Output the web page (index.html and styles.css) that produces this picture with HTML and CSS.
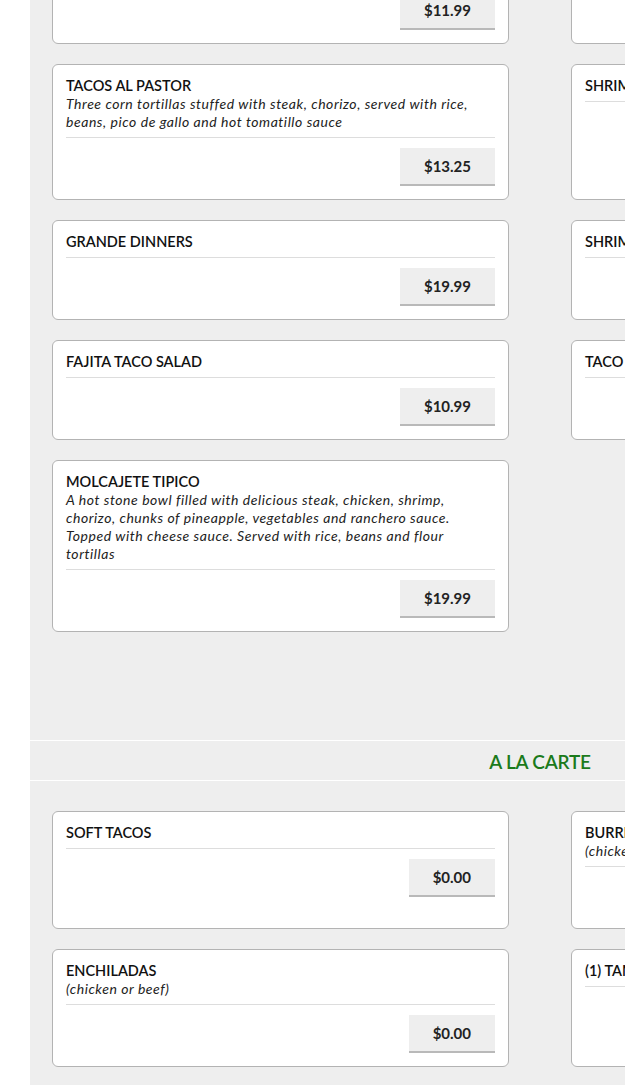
FILE: index.html
```html
<!DOCTYPE html>
<html>
<head>
<meta charset="utf-8">
<link rel="stylesheet" href="styles.css">
</head>
<body>
<div class="page">
  <main class="menu">
    <section class="section first">
      <div class="grid">
        <div class="card">
          <div class="title">CHIMICHANGAS</div>
          <div class="rule"></div>
          <div class="actions"><span class="price">$11.99</span></div>
        </div>
        <div class="card">
          <div class="title">SHRIMP TACOS</div>
          <div class="rule"></div>
          <div class="actions"><span class="price">$12.99</span></div>
        </div>

        <div class="card">
          <div class="title">TACOS AL PASTOR</div>
          <div class="desc">Three corn tortillas stuffed with steak, chorizo, served with rice, beans, pico de gallo and hot tomatillo sauce</div>
          <div class="rule"></div>
          <div class="actions"><span class="price">$13.25</span></div>
        </div>
        <div class="card">
          <div class="title">SHRIMP FAJITAS</div>
          <div class="rule"></div>
          <div class="actions"><span class="price">$15.99</span></div>
        </div>

        <div class="card">
          <div class="title">GRANDE DINNERS</div>
          <div class="rule"></div>
          <div class="actions"><span class="price">$19.99</span></div>
        </div>
        <div class="card">
          <div class="title">SHRIMP CHIMICHANGA</div>
          <div class="rule"></div>
          <div class="actions"><span class="price">$13.99</span></div>
        </div>

        <div class="card">
          <div class="title">FAJITA TACO SALAD</div>
          <div class="rule"></div>
          <div class="actions"><span class="price">$10.99</span></div>
        </div>
        <div class="card">
          <div class="title">TACO SALAD</div>
          <div class="rule"></div>
          <div class="actions"><span class="price">$8.99</span></div>
        </div>

        <div class="card">
          <div class="title">MOLCAJETE TIPICO</div>
          <div class="desc">A hot stone bowl filled with delicious steak, chicken, shrimp, chorizo, chunks of pineapple, vegetables and ranchero sauce. Topped with cheese sauce. Served with rice, beans and flour tortillas</div>
          <div class="rule"></div>
          <div class="actions"><span class="price">$19.99</span></div>
        </div>
      </div>
    </section>

    <header class="band"><h2 class="band-title">A LA CARTE</h2></header>

    <section class="section">
      <div class="grid">
        <div class="card">
          <div class="title">SOFT TACOS</div>
          <div class="rule"></div>
          <div class="actions"><span class="price">$0.00</span></div>
        </div>
        <div class="card">
          <div class="title">BURRITOS</div>
          <div class="desc">(chicken or beef)</div>
          <div class="rule"></div>
          <div class="actions"><span class="price">$0.00</span></div>
        </div>
        <div class="card">
          <div class="title">ENCHILADAS</div>
          <div class="desc">(chicken or beef)</div>
          <div class="rule"></div>
          <div class="actions"><span class="price">$0.00</span></div>
        </div>
        <div class="card">
          <div class="title">(1) TAMALE</div>
          <div class="rule"></div>
          <div class="actions"><span class="price">$0.00</span></div>
        </div>
      </div>
    </section>
  </main>
</div>
</body>
</html>
```
FILE: styles.css
```css
html, body {
  margin: 0;
  padding: 0;
  background: #ffffff;
  overflow: hidden;
}
body {
  font-family: Lato, "Liberation Sans", sans-serif;
  color: #111;
}
.page {
  padding-left: 30px;
  width: 1020px;
}
.menu {
  background: #eeeeee;
  min-height: 1200px;
}
.section {
  padding: 0 22px;
}
.section.first {
  margin-top: -56px;
  padding-bottom: 108px;
}
.grid {
  display: grid;
  grid-template-columns: 457px 457px;
  column-gap: 62px;
  row-gap: 20px;
}
.card {
  background: #fff;
  border: 1px solid #b3b3b3;
  border-radius: 6px;
  padding: 12px 13px 13px;
  display: flex;
  flex-direction: column;
}
.title {
  font-size: 14.5px;
  font-weight: 600;
  line-height: 18px;
  color: #111;
}
.desc {
  font-size: 14px;
  font-style: italic;
  line-height: 18px;
  color: #222;
  letter-spacing: 0.55px;
}
.rule {
  border-top: 1px solid #dddddd;
  margin-top: 6px;
}
.actions {
  display: flex;
  justify-content: flex-end;
  margin-top: 10px;
}
.price {
  display: flex;
  align-items: center;
  height: 36px;
  padding: 0 24px;
  background: #eeeeee;
  border-bottom: 2px solid #b9b9b9;
  font-size: 15px;
  font-weight: 700;
  color: #222;
}
.band {
  border-top: 1px solid #ffffff;
  border-bottom: 1px solid #ffffff;
  box-sizing: border-box;
  height: 41px;
  padding-top: 2px;
  display: flex;
  align-items: center;
  justify-content: center;
  margin-bottom: 30px;
}
.band-title {
  margin: 0;
  font-size: 19px;
  font-weight: 600;
  color: #1b7a1b;
  letter-spacing: -0.2px;
}
```
